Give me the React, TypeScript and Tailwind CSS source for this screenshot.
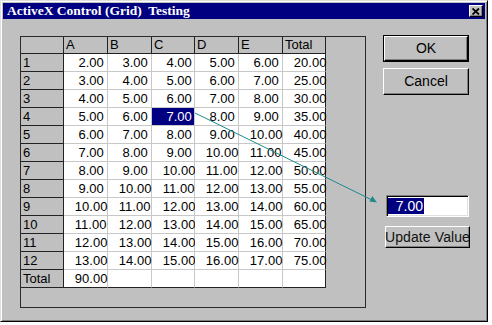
import React from "react";

const HEAD = ["", "A", "B", "C", "D", "E", "Total"];

function fmt(n: number) {
  return n.toFixed(2).padStart(8, " ");
}

function buildRows(): string[][] {
  const rows: string[][] = [];
  for (let i = 1; i <= 12; i++) {
    const vals = [i + 1, i + 2, i + 3, i + 4, i + 5];
    const tot = vals.reduce((a, b) => a + b, 0);
    rows.push([String(i), ...vals.map(fmt), fmt(tot)]);
  }
  rows.push(["Total", fmt(90), "", "", "", "", ""]);
  return rows;
}

export default function App() {
  const rows = buildRows();
  const font = { fontFamily: '"Liberation Sans", Arial, sans-serif' };
  return (
    <div className="w-[492px] h-[325px] bg-white" style={font}>
      <div className="relative w-[488px] h-[322px] bg-[#c0c0c0] border border-t-[#dfdfdf] border-l-[#dfdfdf] border-r-black border-b-black shadow-[inset_1px_1px_0_#ffffff,inset_-1px_-1px_0_#808080] p-[2px]">
        {/* title bar */}
        <div className="h-[16px] bg-[#000080] flex items-center justify-between pl-[4px] pr-[2px]">
          <span
            className="text-white text-[13.5px] font-bold leading-none whitespace-pre"
            style={{ fontFamily: '"Liberation Serif", "Times New Roman", serif' }}
          >
            ActiveX Control (Grid)  Testing
          </span>
          <div className="w-[14px] h-[12px] bg-[#c0c0c0] border border-t-white border-l-white border-r-black border-b-black shadow-[inset_-1px_-1px_0_#808080] flex items-center justify-center">
            <svg width="8" height="7" viewBox="0 0 8 7">
              <path d="M0.5 0.5 L7 6.5 M7 0.5 L0.5 6.5" stroke="#000" strokeWidth="1.8" />
            </svg>
          </div>
        </div>

        {/* body */}
        <div className="flex pt-[17px] pl-[17px]">
          {/* grid control */}
          <div className="w-[346px] h-[272px] border border-[#2a2a2a] bg-[#c0c0c0]">
            <div className="grid grid-cols-[43px_44px_44px_43px_44px_44px_43px] grid-rows-[17px_repeat(13,18px)] w-[305px] text-[13px] text-black">
              {HEAD.map((h, c) => (
                <div
                  key={"h" + c}
                  className="bg-[#c0c0c0] border-r border-b border-[#222] pl-[2px] leading-[16px]"
                >
                  {h}
                </div>
              ))}
              {rows.map((r, ri) =>
                r.map((v, c) => {
                  if (c === 0) {
                    return (
                      <div
                        key={ri + "-" + c}
                        className="bg-[#c0c0c0] border-r border-b border-[#222] pl-[2px] leading-[17px]"
                      >
                        {v}
                      </div>
                    );
                  }
                  const sel = ri === 3 && c === 3;
                  const lastCol = c === 6;
                  const lastRow = ri === 12;
                  return (
                    <div
                      key={ri + "-" + c}
                      className={
                        "border-r border-b whitespace-pre leading-[17px] " +
                        (sel ? "bg-[#000080] text-white " : "bg-white ") +
                        (lastCol ? "border-r-[#222] " : "border-r-[#c8c8c8] ") +
                        (lastRow ? "border-b-[#222]" : "border-b-[#c8c8c8]")
                      }
                    >
                      {v}
                    </div>
                  );
                })
              )}
            </div>
          </div>

          {/* right column */}
          <div className="ml-[17px] mt-[-1px] flex flex-col text-[14px] text-black">
            <div className="w-[86px] h-[27px] border border-black">
              <div className="w-full h-full border border-t-white border-l-white border-r-black border-b-black shadow-[inset_-1px_-1px_0_#808080] flex items-center justify-center">
                OK
              </div>
            </div>
            <div className="mt-[6px] w-[86px] h-[27px] border border-t-white border-l-white border-r-black border-b-black shadow-[inset_-1px_-1px_0_#808080] flex items-center justify-center">
              Cancel
            </div>
            <div className="mt-[100px] ml-[3px] w-[83px] h-[22px] bg-white border border-t-[#808080] border-l-[#808080] border-r-white border-b-white shadow-[inset_1px_1px_0_#000000,inset_-1px_-1px_0_#dfdfdf] flex items-center pl-[1px]">
              <span className="bg-[#000080] text-white h-[16px] w-[36px] leading-[16px] text-right pr-[1px]">
                7.00
              </span>
            </div>
            <div className="mt-[9px] ml-[2px] w-[85px] h-[22px] border border-t-white border-l-white border-r-black border-b-black shadow-[inset_-1px_-1px_0_#808080] flex items-center justify-center whitespace-nowrap text-[#111] tracking-[0.1px]">
              Update Value
            </div>
          </div>
        </div>

        {/* connector arrow */}
        <svg
          className="absolute left-[-1px] top-[-1px] pointer-events-none"
          width="488"
          height="322"
          viewBox="0 0 488 322"
        >
          <line x1="195" y1="113" x2="372" y2="200" stroke="#1f8a8a" strokeWidth="1" />
          <polygon points="377,202.5 369.5,201.5 372.3,195.9" fill="#1f8a8a" />
        </svg>
      </div>
    </div>
  );
}
